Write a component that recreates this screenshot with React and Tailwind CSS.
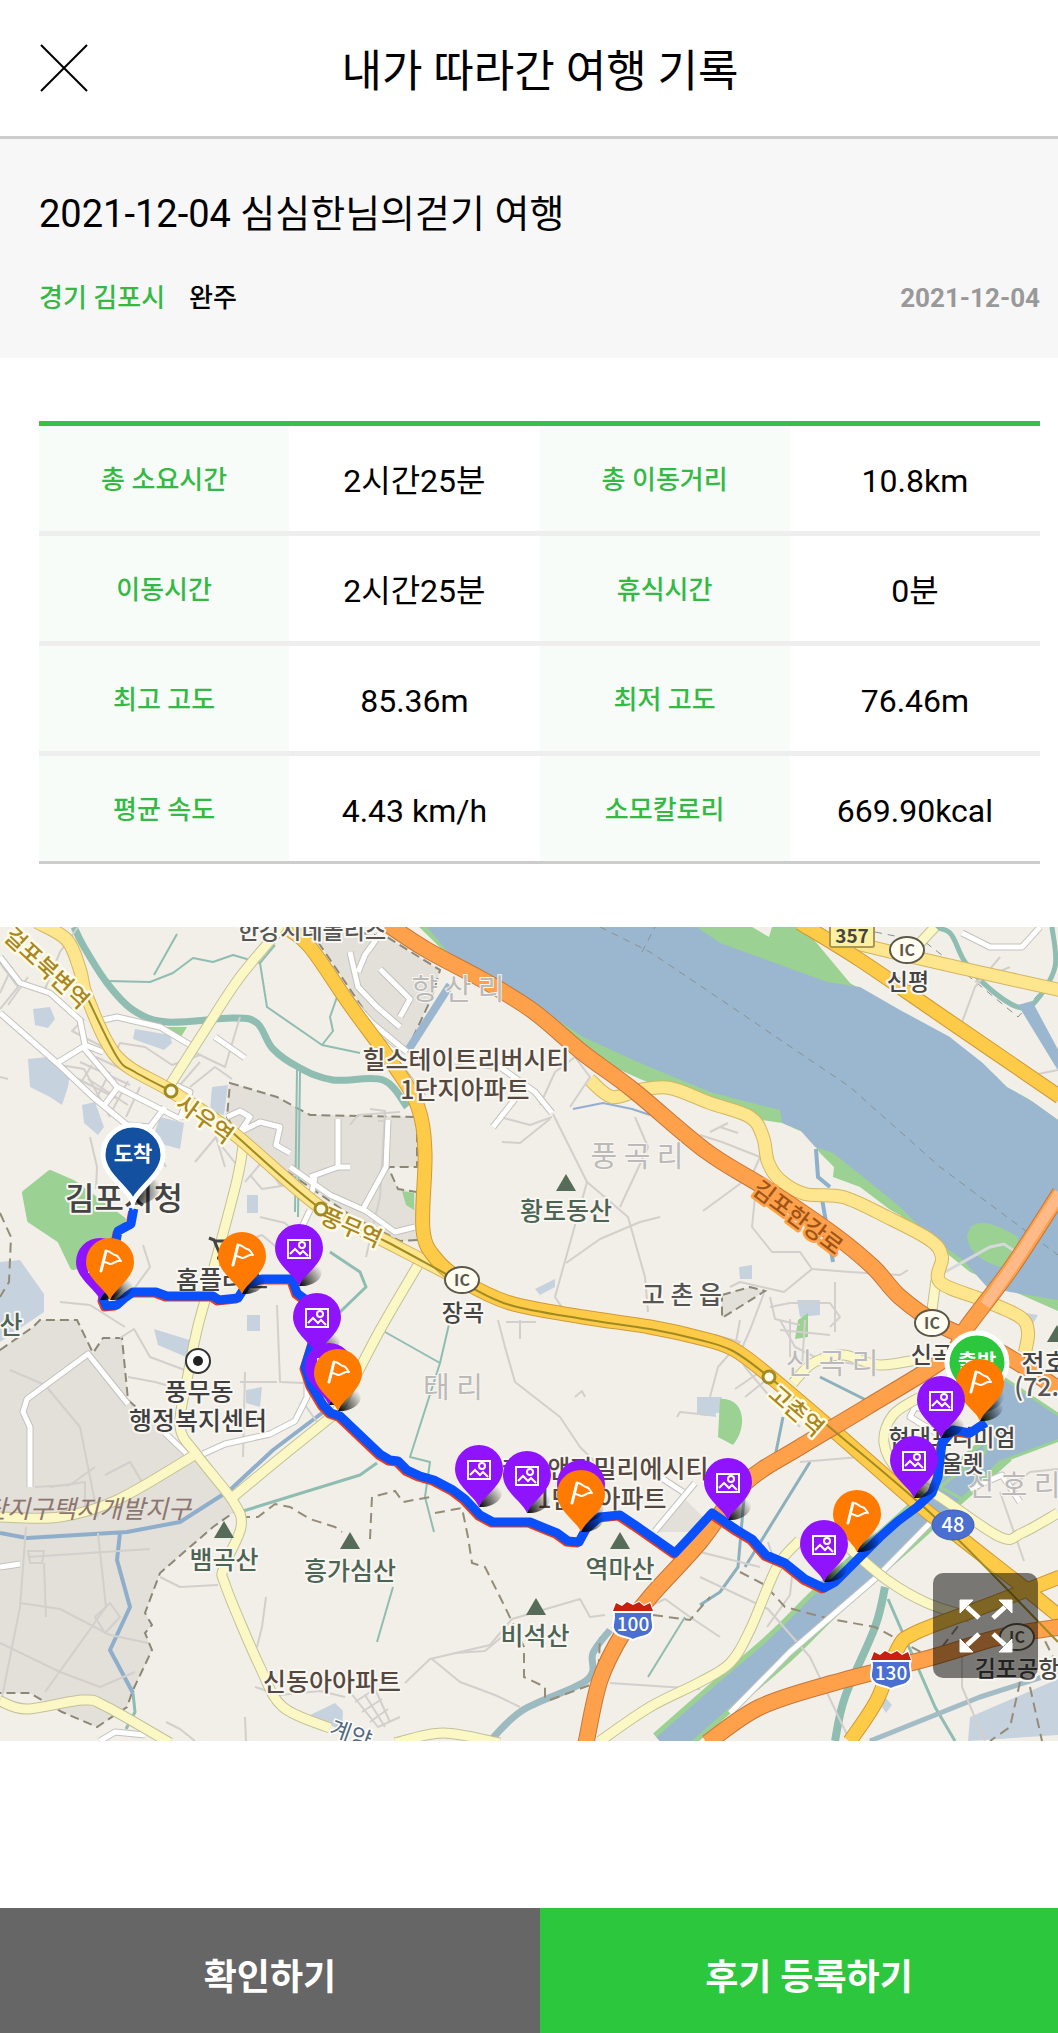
import { useState } from "react";

const rows = [
    ["총 소요시간", "2시간25분", "총 이동거리", "10.8km"],
    ["이동시간", "2시간25분", "휴식시간", "0분"],
    ["최고 고도", "85.36m", "최저 고도", "76.46m"],
    ["평균 속도", "4.43 km/h", "소모칼로리", "669.90kcal"],
];

/* ---------- map data ---------- */

const WATER = "#9bb7d0";
const GREEN = "#9bd193";
const STREAM = "#8fbdb2";

const lots = [
    "M33 82L50 80L55 92L48 101L35 98Z",
    "M135 102L170 108L172 116L164 123L133 112Z",
    "M28 132L48 130L70 145L68 160L62 178L50 170L30 160Z",
    "M82 178L95 175L104 200L98 208L84 196Z",
    "M160 190L184 196L180 222L165 218L155 205Z",
    "M212 160L228 158L224 188L210 184Z",
    "M247 268L258 268L258 286L247 286Z",
    "M0 335L20 333L44 367L44 385L0 415Z",
    "M154 402L196 415L186 430L158 418Z",
    "M247 388L260 388L260 404L247 404Z",
    "M246 463L262 460L260 480L246 476Z",
    "M310 788L335 776L343 784L342 804L326 796Z",
    "M535 362L555 352L555 360L540 368Z",
    "M697 470L722 470L722 486L697 486Z",
    "M797 373L820 373L820 388L800 390Z",
    "M739 340L752 338L752 352L740 352Z",
    "M700 470L715 472L716 490L700 488Z",
    "M1020 385L1038 388L1030 402L1018 396Z",
    "M970 790L1058 752L1058 808L968 814Z",
    "M885 770L892 778L886 786L882 780Z",
];

const minorRoads = [
    "M0 36L18 60L0 82", "M12 40L0 66", "M45 62L60 25L78 0", "M28 50L8 78",
    "M60 138L84 142L110 190", "M70 148L118 172", "M80 135L130 158", "M96 130L160 160", "M92 138L78 160",
    "M110 145L96 172", "M128 154L112 184", "M140 160L126 190", "M88 152L128 178",
    "M103 120L72 104L84 92", "M113 130L120 116L145 120L172 138L200 128",
    "M175 150L196 126L225 140L240 90", "M180 158L200 135", "M190 160L215 140L232 152",
    "M90 210L97 240L96 262", "M150 212L166 240", "M195 235L216 210L225 240", "M216 212L240 242",
    "M245 255L262 235L275 250M262 232L280 258L300 245M250 248L262 262L288 258",
    "M260 290L285 296L310 320", "M240 316L262 308L300 340",
    "M0 150L8 152", "M128 370L150 340L143 318", "M60 375L90 378L125 400",
    "M120 411L134 402L150 430L190 445", "M128 450L155 455L180 462",
    "M277 378L280 455L304 456", "M240 455L277 455", "M245 445L243 530", "M305 478L322 502",
    "M10 443L45 458L80 500L98 590", "M35 560L70 558L95 540", "M50 560L85 555L85 590", "M105 548L130 535L142 555",
    "M28 630L150 622", "M26 600L20 680L0 780", "M98 606L106 680L45 765", "M44 636L46 690",
    "M20 676L60 682L110 708L148 716", "M0 716L60 745L100 760L135 745",
    "M160 650L180 660L218 658", "M266 670L262 700L257 720", "M28 624L44 624L42 636L30 636Z",
    "M95 690L110 676L120 690L105 706Z",
    "M370 182L385 184L380 270L366 330", "M385 194L378 194", "M350 198L358 188L400 185",
    "M553 187L587 255L555 370L565 385L590 395", "M587 255L628 290L645 350L648 385",
    "M566 336L600 312L640 295L660 290", "M635 190L648 220L620 280", "M550 192L520 216L502 215",
    "M540 178L555 145L575 130L590 150L570 180", "M500 190L530 198L552 190",
    "M700 208L722 215L760 230L752 248L703 284", "M710 205L728 196M720 200L738 206",
    "M755 270L752 300L772 325L800 325L812 342L850 345L900 348L908 343",
    "M812 342L784 365L740 355L730 360", "M764 366L750 403L738 430", "M770 380L790 376L830 376L840 390L830 400",
    "M770 370L775 392L800 398", "M835 355L835 405",
    "M498 393L505 420L515 455L560 490L580 520L610 550", "M520 393L520 412M506 395L536 395",
    "M575 470L582 464L585 470", "M677 490L680 485L708 488",
    "M405 756L430 732L490 718L512 692L580 672L590 690L605 688",
    "M432 732L460 755L495 768L520 780", "M455 726L485 724L510 703",
    "M350 765L378 800L400 790", "M355 775L375 762L390 795M362 785L382 772M370 795L388 782M365 768L385 800",
    "M255 760L280 768L320 764L345 770", "M166 795L180 802L195 814", "M245 790L246 814",
    "M700 650L768 682L810 730L850 814", "M793 640L790 668L767 700", "M768 615L776 640L770 655",
    "M740 393L735 420L745 440L770 470L800 500", "M780 393L795 420L815 430L870 440",
    "M715 408L740 415L718 440L710 470", "M735 462L760 445L780 460M745 470L770 450",
    "M780 403L830 408M790 392L790 430M805 393L802 440", "M800 535L860 530L900 560",
    "M1000 565L1024 634M1010 560L1030 545L1058 542", "M962 720L962 760L985 814",
    "M958 106L975 60L1000 30", "M975 55L1010 40", "M1033 148L1058 143",
    "M648 680L665 672L690 690L720 710", "M610 756L700 762", "M700 625L760 640",
];

const whiteRoads = [
    "M0 30L20 56L50 66L80 93L85 118L103 125",
    "M0 86L57 136L93 170L127 198L150 200",
    "M57 136L83 120L117 160L180 192",
    "M103 180L118 160", "M180 192L190 165L175 158", "M150 200L165 180",
    "M103 93L117 90L160 100L197 122M215 110L245 131",
    "M30 560L30 500L23 485L27 472L88 427L128 477M165 506L188 528",
    "M0 640L20 637",
    "M203 527L225 517L270 507L295 494L307 470L307 450",
    "M423 170L400 140M493 200L515 172M455 134L500 140L535 165L552 186",
    "M340 60L372 96L407 125M358 45L365 28L385 0M350 25L358 60L377 80L400 100M380 42L410 72L400 90M377 110L400 130",
    "M227 190L240 184L250 190L240 205L260 195L280 200L276 218L290 226M338 192L338 240L350 240M388 193L386 240L362 284M338 240L310 250M290 240L330 268L366 284L395 305L415 300",
    "M310 283L302 300M315 250L310 275",
    "M730 786L790 725L877 650L933 593",
    "M962 6L990 20L1022 20L1040 0",
    "M943 487L915 480L910 490L935 505", "M970 562L1002 548L1020 575",
    "M655 604L695 556M660 550L683 565",
    "M100 814L115 805L145 808",
];

const paleRoads = [
    [170, 158, 207, 100, 240, 50, 282, 0],
    [244, 210, 237, 253, 207, 366, 197, 403, 187, 453, 180, 500, 197, 528, 233, 574, 241, 600, 224, 640, 226, 660, 260, 740, 283, 780, 330, 801],
    [336, 486, 285, 527, 233, 570],
    [193, 529, 117, 573, 60, 590, 0, 590],
    [418, 338, 380, 403, 345, 470, 333, 490],
    [0, 774, 27, 782, 83, 773, 107, 780, 170, 816],
    [395, 816, 443, 806, 500, 816],
    [793, 456, 813, 436, 843, 428, 880, 438, 930, 430],
    [931, 390, 936, 353],
    [920, 470, 893, 488, 884, 516, 900, 545, 940, 570, 1000, 610, 1022, 606, 1058, 586],
    [600, 814, 650, 780, 700, 755, 730, 736, 750, 703, 777, 640, 800, 613],
    [848, 620, 887, 653, 927, 676, 970, 690],
    [920, 16, 935, 0],
];

const softRoads = [
    [850, 15, 900, 27, 983, 46, 1060, 63],
    [590, 153, 612, 170, 640, 163, 670, 161, 710, 176, 750, 190, 763, 210, 768, 235, 780, 253, 805, 267, 843, 270, 887, 290, 930, 313, 942, 330, 940, 355, 983, 373, 1020, 390, 1028, 405, 1025, 425],
    [37, -5, 67, 13, 80, 43, 87, 70, 117, 130, 171, 164, 233, 206, 320, 280, 387, 315, 455, 350],
];

const yellowRoads = [
    [285, 0, 310, 20, 350, 78, 395, 140, 418, 180, 425, 226, 423, 303, 437, 333, 463, 354, 510, 376, 583, 390, 650, 400, 700, 411, 733, 422, 767, 447, 833, 503, 913, 573, 967, 616, 1027, 663, 1060, 690],
    [800, -4, 860, 33, 933, 83, 1060, 170],
    [850, 814, 877, 773, 897, 723, 915, 706, 983, 680, 1060, 650],
];

const orangeRoads = [
    [387, -3, 427, 23, 483, 53, 533, 84, 583, 126, 633, 163, 706, 224, 767, 262, 833, 307, 873, 340, 900, 370, 940, 398, 1000, 425, 1060, 463],
    [1060, 266, 1012, 340, 967, 400, 947, 430, 867, 480, 800, 520, 745, 556, 700, 615, 650, 670, 623, 706, 600, 753, 586, 816],
    [707, 816, 760, 780, 833, 756, 933, 730, 1000, 710, 1060, 700],
];

const canal = [665, 820, 722, 770, 780, 720, 833, 668, 903, 606, 947, 566, 1000, 520];

const route = "M133 286L131 297L118 304L114 325L103 372L106 379L117 378L126 370L133 365L156 365L167 369L213 369L219 373L238 371L247 357L262 352L292 352L297 366L305 372L319 395L305 440L311 458L323 478L331 486L340 489L360 508L380 527L390 533L398 534L407 543L420 549L434 553L453 563L465 572L480 588L493 595L530 595L557 606L568 614L579 615L586 602L600 590L620 588L635 598L655 612L675 626L690 610L712 586L737 603L752 612L766 628L785 636L805 652L824 661L835 655L860 630L880 610L898 594L917 580L932 566L938 550L942 516L953 503L970 506L982 498";

const pins = [
    { kind: "photo", x: 100, y: 335 },
    { kind: "flag", x: 110, y: 335 },
    { kind: "flag", x: 242, y: 329 },
    { kind: "photo", x: 299, y: 321 },
    { kind: "photo", x: 317, y: 390 },
    { kind: "photo", x: 329, y: 440 },
    { kind: "flag", x: 338, y: 446 },
    { kind: "photo", x: 479, y: 542 },
    { kind: "photo", x: 527, y: 548 },
    { kind: "photo", x: 581, y: 557 },
    { kind: "flag", x: 581, y: 567 },
    { kind: "photo", x: 728, y: 555 },
    { kind: "flag", x: 857, y: 587 },
    { kind: "photo", x: 824, y: 617 },
    { kind: "photo", x: 914, y: 533 },
    { kind: "flag", x: 980, y: 456 },
    { kind: "photo", x: 941, y: 473 },
];

// 지명 (x, y 는 글자 기준선의 가운데)
const places = [
    { t: "한강시네폴리스", x: 312, y: 12, s: 23, c: "#555" },
    { t: "힐스테이트리버시티", x: 466, y: 142, s: 25, c: "#54483f" },
    { t: "1단지아파트", x: 465, y: 172, s: 25, c: "#54483f" },
    { t: "황토동산", x: 566, y: 293, s: 25, c: "#4d6354" },
    { t: "장곡", x: 463, y: 394, s: 23, c: "#444" },
    { t: "고 촌 읍", x: 682, y: 377, s: 25, c: "#555" },
    { t: "신평", x: 908, y: 63, s: 23, c: "#444" },
    { t: "김포시청", x: 124, y: 283, s: 32, c: "#444" },
    { t: "홈플러스", x: 222, y: 362, s: 25, c: "#444" },
    { t: "산", x: 11, y: 407, s: 25, c: "#4d6354" },
    { t: "풍무동", x: 199, y: 474, s: 25, c: "#3f3f3f" },
    { t: "행정복지센터", x: 198, y: 503, s: 25, c: "#3f3f3f" },
    { t: "뱀곡산", x: 224, y: 642, s: 25, c: "#4d6354" },
    { t: "흥가심산", x: 350, y: 653, s: 25, c: "#4d6354" },
    { t: "역마산", x: 620, y: 651, s: 25, c: "#4d6354" },
    { t: "비석산", x: 535, y: 718, s: 25, c: "#4d6354" },
    { t: "신동아아파트", x: 332, y: 764, s: 25, c: "#54483f" },
    { t: "캐슬앤파밀리에시티", x: 605, y: 551, s: 25, c: "#54483f" },
    { t: "1단지아파트", x: 602, y: 581, s: 25, c: "#54483f" },
    { t: "신곡", x: 932, y: 436, s: 23, c: "#444" },
    { t: "전호산", x: 1056, y: 445, s: 25, c: "#444" },
    { t: "(72.3m)", x: 1060, y: 469, s: 25, c: "#555" },
    { t: "현대프리미엄", x: 952, y: 519, s: 23, c: "#444" },
    { t: "아울렛", x: 952, y: 545, s: 23, c: "#444" },
    { t: "김포공항", x: 1017, y: 750, s: 23, c: "#444" },
];

const districts = [
    { t: "향 산 리", x: 458, y: 73 },
    { t: "풍 곡 리", x: 637, y: 240 },
    { t: "태 리", x: 453, y: 471 },
    { t: "신 곡 리", x: 832, y: 447 },
    { t: "전 호 리", x: 1014, y: 569 },
];

const stations = [
    { t: "걸포북변역", x: 41, y: 47, r: 43 },
    { t: "사우역", x: 200, y: 199, r: 36 },
    { t: "풍무역", x: 348, y: 308, r: 24 },
    { t: "고촌역", x: 791, y: 490, r: 41 },
];

const peaks = [[566, 247], [224, 594], [350, 605], [620, 605], [536, 671], [1057, 398]];
const interchanges = [[907, 23], [462, 353], [932, 396], [1017, 710]];

/* ---------- map parts ---------- */

// smooth line through a flat list of x, y values
function curve(points) {
    const at = (i) => {
        const k = Math.max(0, Math.min(points.length / 2 - 1, i)) * 2;
        return [points[k], points[k + 1]];
    };
    let d = `M${points[0]} ${points[1]}`;
    for (let i = 0; i < points.length / 2 - 1; i++) {
        const [a, b, c, e] = [at(i - 1), at(i), at(i + 1), at(i + 2)];
        d += `C${b[0] + (c[0] - a[0]) / 6} ${b[1] + (c[1] - a[1]) / 6} ${c[0] - (e[0] - b[0]) / 6} ${c[1] - (e[1] - b[1]) / 6} ${c[0]} ${c[1]}`;
    }
    return d;
}

function Roads({ list, width, fill, edge }) {
    return (
        <g fill="none" strokeLinejoin="round">
            {list.map((d) => <path key={d} d={d} stroke={edge} strokeWidth={width + 2} />)}
            {list.map((d) => <path key={d} d={d} stroke={fill} strokeWidth={width} />)}
        </g>
    );
}

function Pin({ kind, x, y }) {
    return (
        <g transform={`translate(${x} ${y})`}>
            <path d="M0 38C6 22 14 14 22 20C26 30 14 39 0 38Z" fill="url(#shade)" />
            <path
                d="M0 38C-4 27 -24 17 -24 0A24 24 0 0 1 24 0C24 17 4 27 0 38Z"
                fill={kind === "flag" ? "#ff7a00" : "#9013fe"}
            />
            {kind === "flag" ? (
                <g fill="none" stroke="#fff" strokeWidth="3" strokeLinecap="round" strokeLinejoin="round">
                    <path d="M-9 9L-4 -11" />
                    <path d="M-4 -11C0 -12 2 -7 5 -7C8 -7 8 -5 11 -1C6 -3 4 3 0 2C-3 1 -4 0 -6 0" strokeWidth="2" />
                </g>
            ) : (
                <g fill="none" stroke="#fff" strokeWidth="2">
                    <rect x="-11" y="-8" width="22" height="18" />
                    <circle cx="3" cy="-3" r="3" />
                    <path d="M-9 6L-4 1L1 6L4 3L9 8" />
                </g>
            )}
        </g>
    );
}

function EndPin({ x, y, label, color }) {
    return (
        <g transform={`translate(${x} ${y})`}>
            <path d="M0 50C8 30 16 22 26 26C32 36 20 50 0 50Z" fill="url(#shade)" />
            <path
                d="M0 47C-4 34 -30 20 -30 0A30 30 0 0 1 30 0C30 20 4 34 0 47Z"
                fill={color}
                stroke="#fff"
                strokeWidth="5"
            />
            <text y="6" textAnchor="middle" fontSize="21" fontWeight="700" fill="#fff">{label}</text>
        </g>
    );
}

function Shield({ x, y, label }) {
    return (
        <g transform={`translate(${x} ${y})`}>
            <path
                d="M-17 -19L-11 -16L-6 -20L0 -17L6 -20L11 -16L17 -19L20 -11C17 -4 21 0 20 6C18 16 6 14 0 18C-6 14 -18 16 -20 6C-21 0 -17 -4 -20 -11Z"
                fill="#4a6fd0"
                stroke="#fff"
                strokeWidth="2"
            />
            <path d="M-17 -19L-11 -16L-6 -20L0 -17L6 -20L11 -16L17 -19L20 -11H-20Z" fill="#c8200f" />
            <path d="M-20 -10H20" stroke="#fff" strokeWidth="2" />
            <text y="9" textAnchor="middle" fontSize="19" fontWeight="500" fill="#fff">{label}</text>
        </g>
    );
}

function RouteMap() {
    return (
        <svg
            viewBox="0 0 1058 814"
            className="block w-full font-['Noto_Sans_CJK_KR',sans-serif]"
            role="img"
            aria-label="여행 경로 지도"
        >
            <defs>
                <radialGradient id="shade" gradientUnits="userSpaceOnUse" cx="0" cy="38" r="28">
                    <stop offset="0" stopColor="#000" />
                    <stop offset="1" stopColor="#000" stopOpacity="0" />
                </radialGradient>
            </defs>
            <rect width="1058" height="814" fill="#f2efe8" />

            {/* 개발지구 */}
            <g fill="#e2e0d8" stroke="#8d8778" strokeWidth="2" strokeDasharray="9 5">
                <path d="M0 423L33 400L40 393L77 393L93 426L103 411L122 411L128 473L187 526L200 527L237 583L213 600L160 646L145 686L152 698L145 706L152 723L133 763L127 780L97 800L62 785L30 766L-4 766V423Z" />
                <path d="M230 156L277 170L310 188L417 190L417 240L388 240L398 262L417 265V313L400 314L350 288L240 212L227 190Z" />
                <path d="M305 -4L387 10L440 43L432 70L407 123L370 92L335 40Z" />
                <path d="M722 368L750 360L765 364L722 391Z" />
                <path d="M655 605L683 570L708 595L690 605Z" stroke="none" />
            </g>
            <g fill="#c6d3de">
                {lots.map((d) => <path key={d} d={d} />)}
            </g>
            <path d="M50 246L73 256L123 293L112 330L73 340L60 313L30 293L25 266Z" fill={GREEN} stroke={GREEN} strokeWidth="6" strokeLinejoin="round" />
            <path d="M163 100H187L181 110ZM402 264L414 266V283L406 278ZM798 393L808 386V410L795 412ZM720 472C745 470 748 500 733 518L718 510Z" fill={GREEN} />

            {/* 하천 */}
            <g fill="none" strokeLinejoin="round">
                <path d={curve([74, 0, 84, 20, 107, 56, 133, 83, 167, 95, 233, 91, 257, 96, 273, 122, 300, 141, 333, 153, 383, 153, 407, 180])} stroke={STREAM} strokeWidth="7" />
                <path d="M107 54L150 55L173 46L193 31L213 35L233 28L260 36L267 80L322 118L360 126M154 48L177 7M260 36L275 18M322 118L333 104L330 90L337 70M297 143L295 285M300 145L298 290" stroke={STREAM} strokeWidth="2" />
                <path d="M450 58L407 125" stroke={WATER} strokeWidth="8" />
                <path d="M0 606L27 611L127 605L180 595L230 563L273 523L330 480M120 606L117 633L130 680L110 723L133 766" stroke="#8faecb" strokeWidth="4" />
                <path d="M240 585L360 548L377 536M133 766L135 785L126 802" stroke={STREAM} strokeWidth="3" />
                <path d="M385 405L440 436L410 530L430 535L425 570L434 605M450 393L440 436M393 660L377 715M685 690L648 750" stroke={STREAM} strokeWidth="2" />
                <path d="M330 325L360 345L366 360L340 385" stroke={STREAM} strokeWidth="3" />
                <path d={curve([610, 703, 593, 726, 587, 753, 523, 783, 490, 814])} stroke="#9dbac0" strokeWidth="7" />
                <path d="M783 490L775 530L745 560L738 640L720 665L700 678M820 450L870 475M810 535L745 640" stroke="#8db0bd" strokeWidth="3" />
                <path d={curve([885, 660, 875, 700, 845, 770, 835, 814])} stroke={STREAM} strokeWidth="8" />
                <path d="M888 672L935 780L955 814" stroke={STREAM} strokeWidth="3" />
                <path d="M870 814L980 770L1058 745" stroke="#a3bcc6" strokeWidth="5" />
                <path d="M573 182L603 176L632 182L650 188" stroke="#94add0" strokeWidth="2" />
            </g>

            {/* 한강 */}
            <path d="M415 -4L453 33L500 57L543 86L583 126L640 152L710 180L780 200L805 205L820 226L830 250L850 262L900 288L930 313L970 345L1058 384V193L950 115L850 56L800 -4Z" fill={GREEN} />
            <path d="M427 0L453 31L500 55L543 83L583 110L640 136L710 165L740 173L780 183L782 196L800 203L815 220L833 226L867 253L900 280L930 310L963 333L987 360L1010 365L1058 373V193L1033 175L1007 160L983 136L950 110L900 83L860 60L827 55L767 33L720 16L697 0Z" fill={WATER} />
            <path d="M752 0L769 10L772 0ZM762 193L782 196L800 204L815 220L816 258L790 250L770 225ZM820 226L834 240L833 250L860 260L930 313L915 312L850 272L822 256ZM950 110L983 136L1007 160L1036 176L1050 178L960 112Z" fill="#f2efe8" />
            <path d="M816 222L818 250L830 260M822 272L833 335" fill="none" stroke="#8db0cb" strokeWidth="4" />
            <path d="M967 310C970 290 990 293 1018 310L1020 330L1000 340C985 335 970 328 967 310Z" fill={GREEN} />
            <path d="M945 345L990 320L1004 317L1016 325" fill="none" stroke="#d6d9dc" strokeWidth="3" />
            <path d="M600 0L650 25L720 72L850 160L940 240L1058 328M642 25L655 0M875 5L925 15L960 42L1018 90L1045 60" fill="none" stroke="#8a9091" strokeWidth="1" strokeDasharray="7 6" />
            <path d={curve([930, 0, 950, 6, 965, 35, 990, 62, 1018, 80, 1035, 75, 1055, 40, 1052, 0])} fill="none" stroke={STREAM} strokeWidth="5" />
            <path d="M1018 78L1032 74L1062 130V150Z" fill={WATER} />

            {/* 아라뱃길 */}
            <path d={curve(canal)} fill="none" stroke={GREEN} strokeWidth="36" />
            <path d={curve(canal)} fill="none" stroke={WATER} strokeWidth="26" />
            <path d="M985 450L1005 452L1062 490V512L1000 535L962 572L940 560L985 525Z" fill={WATER} stroke={GREEN} strokeWidth="3" />

            <g fill="none" stroke="#d2cfcd" strokeWidth="2" strokeLinejoin="round">
                {minorRoads.map((d) => <path key={d} d={d} />)}
            </g>
            <g fill="none" stroke="#958c78" strokeWidth="2" strokeDasharray="10 6">
                <path d="M0 286L11 310L9 355L0 370M240 590L258 590L275 577L290 580L310 592L335 600L342 605M370 612L372 570L395 564L403 575L430 570M435 586L462 581L468 610L472 636L485 640L505 680L524 720L524 750L545 760L545 775M550 773L598 755L600 710M653 688L690 693L710 670M740 645L765 658L785 680L830 692L875 700L930 730" />
                <path d="M942 720L965 690M1020 755L1010 800L990 814M1030 760L1042 814M1038 700L1058 740" />
            </g>
            <Roads list={whiteRoads} width={5} fill="#fff" edge="#c4c2be" />
            <Roads list={paleRoads.map(curve)} width={9} fill="#fbf8c6" edge="#c3c09a" />
            <Roads list={softRoads.map(curve)} width={12} fill="#fee68f" edge="#d3b65f" />
            <Roads list={yellowRoads.map(curve)} width={13} fill="#fecb49" edge="#cf9a35" />
            <Roads list={orangeRoads.map(curve)} width={15} fill="#ffa04a" edge="#c5773a" />
            <path d="M1060 266L1012 340L985 378" fill="none" stroke="#ffba87" strokeWidth="11" />
            <path
                d={`${curve([87, 70, 117, 130, 135, 145, 171, 164])}${curve([233, 206, 321, 282, 387, 315, 463, 356, 510, 378, 583, 392, 650, 402, 700, 413, 733, 424, 769, 450, 833, 503, 940, 595, 1058, 715])}`}
                fill="none"
                stroke="#a08a22"
                strokeWidth="2"
            />

            {peaks.map(([x, y]) => (
                <path key={x} d={`M${x} ${y}L${x + 10} ${y + 17}H${x - 10}Z`} fill="#566b58" />
            ))}
            <g transform="translate(198 434)">
                <circle r="12" fill="#fff" stroke="#333" strokeWidth="2" />
                <circle r="5" fill="#222" />
            </g>
            <path d="M209 311L214 313L219 325H232M214 314H232M217 331H230" fill="none" stroke="#444" strokeWidth="3" />

            <g fontSize="29" fill="#bcbab8" stroke="#f7f5f1" strokeWidth="2" paintOrder="stroke" textAnchor="middle">
                {districts.map((p) => <text key={p.t} x={p.x} y={p.y}>{p.t}</text>)}
            </g>
            <g textAnchor="middle" fontWeight="500" stroke="#f8f6f1" strokeWidth="4" strokeLinejoin="round" paintOrder="stroke">
                {places.map((p) => (
                    <text key={p.t + p.x} x={p.x} y={p.y} fontSize={p.s} fill={p.c}>{p.t}</text>
                ))}
            </g>
            <text x="191" y="591" textAnchor="end" fontSize="25" fontStyle="italic" fill="#8d756f">단지구택지개발지구</text>
            <g textAnchor="middle" fontSize="23" fontWeight="500" fill="#a9871c" stroke="#fffbe6" strokeWidth="5" strokeLinejoin="round" paintOrder="stroke">
                {stations.map((p) => (
                    <text key={p.t} transform={`translate(${p.x} ${p.y}) rotate(${p.r})`}>{p.t}</text>
                ))}
            </g>
            <text
                transform="translate(793 297) rotate(37)"
                textAnchor="middle"
                fontSize="23"
                fontWeight="500"
                fill="#9c5417"
                stroke="#ffa04a"
                strokeWidth="5"
                strokeLinejoin="round"
                paintOrder="stroke"
            >
                김포한강로
            </text>
            <text transform="translate(348 815) rotate(20)" textAnchor="middle" fontSize="23" fill="#54697d" stroke="#fff" strokeWidth="3" paintOrder="stroke">계양</text>
            {[[171, 164], [321, 282], [769, 450]].map(([x, y]) => (
                <circle key={x} cx={x} cy={y} r="6" fill="#fffbe6" stroke="#a08a22" strokeWidth="3" />
            ))}

            {/* 도로 번호 */}
            {interchanges.map(([x, y]) => (
                <g key={x} transform={`translate(${x} ${y})`}>
                    <ellipse rx="17" ry="13" fill="#fffef0" stroke="#5c574b" strokeWidth="2" />
                    <text y="6" textAnchor="middle" fontSize="16" fontWeight="700" fill="#5c574b">IC</text>
                </g>
            ))}
            <rect x="830" y="-4" width="44" height="24" rx="2" fill="#fdf0a0" stroke="#a8965a" strokeWidth="2" />
            <text x="852" y="16" textAnchor="middle" fontSize="19" fontWeight="700" fill="#444">357</text>
            <ellipse cx="953" cy="598" rx="21" ry="15" fill="#4a6fd0" stroke="#3b5cb8" strokeWidth="1" />
            <text x="953" y="605" textAnchor="middle" fontSize="20" fontWeight="500" fill="#fff">48</text>
            <Shield x={633} y={695} label="100" />
            <Shield x={891} y={744} label="130" />

            {/* 이동 경로 */}
            <g fill="none" strokeLinejoin="round" strokeLinecap="square">
                <path d={route} stroke="#f03a1e" strokeWidth="7" transform="translate(-2 2)" />
                <path d={route} stroke="#0a50fa" strokeWidth="9" />
            </g>

            <EndPin x={977} y={436} label="출발" color="#2dc73e" />
            {pins.map((p) => <Pin key={`${p.kind}${p.x}`} {...p} />)}
            <EndPin x={133} y={228} label="도착" color="#1450a0" />
        </svg>
    );
}

export default function App() {
    const [closed, setClosed] = useState(false);

    if (closed) return null;

    return (
        <div className="flex min-h-screen flex-col bg-white font-[Roboto,'Noto_Sans_CJK_KR',sans-serif] text-black">
            <header className="grid grid-cols-[1fr_auto_1fr] items-center border-b-[3px] border-[#cccccc] py-10 pr-[18px] pl-10">
                <button type="button" aria-label="닫기" className="w-12" onClick={() => setClosed(true)}>
                    <svg viewBox="0 0 48 48" className="size-12" fill="none" stroke="#000" strokeWidth="2">
                        <path d="M1 1L47 47M47 1L1 47" />
                    </svg>
                </button>
                <h1 className="pt-2 text-[44px] leading-12">내가 따라간 여행 기록</h1>
            </header>

            <section className="bg-[#f7f7f7] pt-[50px] pr-[18px] pb-[35px] pl-[39px]">
                <h2 className="text-[38px] leading-[50px]">2021-12-04 심심한님의걷기 여행</h2>
                <div className="mt-[34px] flex items-center text-[26px] leading-[50px] font-medium">
                    <span className="text-[#35b945]">경기 김포시</span>
                    <span className="ml-6">완주</span>
                    <time className="ml-auto font-bold text-[#999999]">2021-12-04</time>
                </div>
            </section>

            <div className="py-[63px] pr-[18px] pl-[39px]">
                <table className="w-full table-fixed border-separate border-spacing-0 border-t-[5px] border-b-[3px] border-t-[#3cbf48] border-b-[#cccccc]">
                    <tbody>
                        {rows.map((row, i) => (
                            <tr key={row[0]}>
                                {row.map((cell, j) => {
                                    const line = i < rows.length - 1 ? "h-[110px] border-b-[5px] border-[#eeeeee]" : "h-[105px]";
                                    return j % 2 === 0 ? (
                                        <th key={j} scope="row" className={`${line} bg-[#f7fcf8] px-0 pt-1 pb-0 text-center text-[26px] font-medium text-[#35b945]`}>
                                            {cell}
                                        </th>
                                    ) : (
                                        <td key={j} className={`${line} px-0 pt-1 pb-0 text-center text-[32px]`}>{cell}</td>
                                    );
                                })}
                            </tr>
                        ))}
                    </tbody>
                </table>
            </div>

            <div className="relative">
                <RouteMap />
                <button
                    type="button"
                    aria-label="지도 크게 보기"
                    className="absolute right-5 bottom-[63px] flex size-[105px] items-center justify-center rounded-[10px] bg-black/50"
                >
                    <svg viewBox="0 0 54 54" className="size-[54px]" fill="#fff" stroke="#fff">
                        <path d="M8 8L20 19M46 8L34 19M8 46L20 35M46 46L34 35" fill="none" strokeWidth="5" />
                        <path d="M1 1H14L1 14ZM53 1V14L40 1ZM1 53V40L14 53ZM53 53H40L53 40Z" strokeWidth="1" />
                    </svg>
                </button>
            </div>

            <footer className="mt-auto grid grid-cols-[540fr_518fr] text-[36px] leading-[53px] font-bold text-white">
                <button type="button" className="bg-[#666666] pt-11 pb-7">확인하기</button>
                <button type="button" className="bg-[#2dc73e] pt-11 pb-7 pl-5">후기 등록하기</button>
            </footer>
        </div>
    );
}
